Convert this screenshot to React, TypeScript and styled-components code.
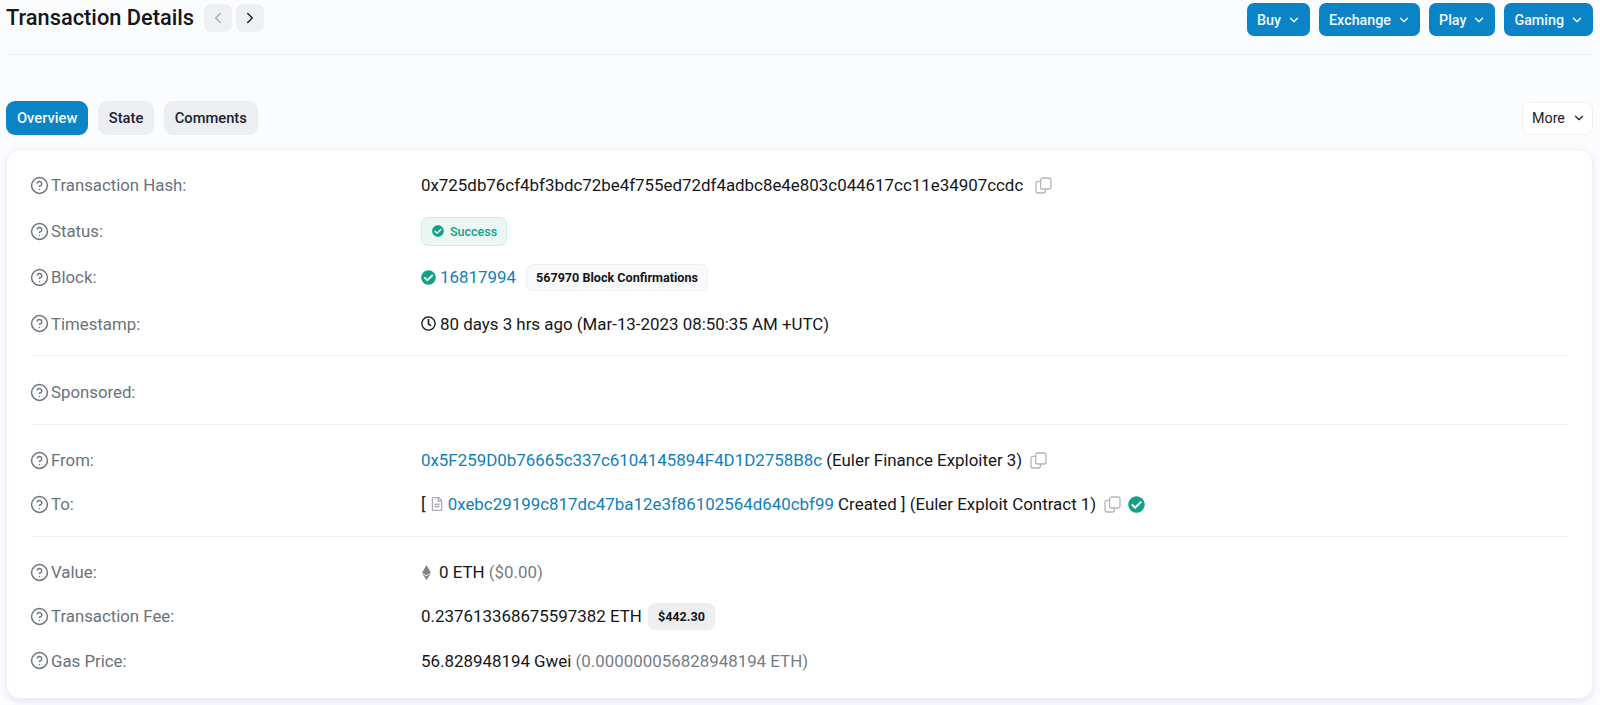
import React from 'react';
import styled, { createGlobalStyle } from 'styled-components';
import { ChevronDown, ChevronLeft, ChevronRight, CircleHelp } from 'lucide-react';
import { FaCheckCircle, FaEthereum, FaRegClock, FaRegFileAlt } from 'react-icons/fa';

const GlobalStyle = createGlobalStyle`
  html, body {
    margin: 0;
    padding: 0;
    height: 705px;
    overflow: hidden;
    background: #fbfcfe;
    font-family: Roboto, 'Liberation Sans', sans-serif;
    color: #14161a;
  }
  * { box-sizing: border-box; }
`;

const Page = styled.div`
  padding: 0 7px 0 6px;
`;

const Header = styled.header`
  display: flex;
  justify-content: space-between;
  align-items: flex-start;
  height: 55px;
  padding-top: 3px;
  border-bottom: 1px solid #edeff2;
`;

const TitleGroup = styled.div`
  display: flex;
  align-items: center;
  gap: 4px;
  height: 30px;
`;

const Title = styled.h1`
  margin: 0 6px 0 0;
  font-size: 21.8px;
  font-weight: 500;
  line-height: 30px;
  color: #14161a;
`;

const NavButton = styled.button<{ $off?: boolean }>`
  width: 28px;
  height: 28px;
  padding: 0;
  border: 0;
  border-radius: 7px;
  background: #eff0f3;
  display: flex;
  align-items: center;
  justify-content: center;
  color: ${(p) => (p.$off ? '#a9adb3' : '#1b2330')};
`;

const Menu = styled.div`
  display: flex;
  gap: 9px;
`;

const MenuButton = styled.button`
  height: 33px;
  padding: 0 9px 0 10px;
  border: 0;
  border-radius: 7px;
  background: #0a84c6;
  color: #f2f8fc;
  display: flex;
  align-items: center;
  gap: 6px;
  font: 500 14.3px Roboto, sans-serif;
`;

const TabBar = styled.div`
  display: flex;
  justify-content: space-between;
  align-items: center;
  margin-top: 46px;
  height: 34px;
`;

const Tabs = styled.div`
  display: flex;
  gap: 9.5px;
`;

const Tab = styled.button<{ $active?: boolean }>`
  height: 34px;
  padding: 0 11px;
  border: 0;
  border-radius: 9px;
  background: ${(p) => (p.$active ? '#0a84c6' : '#eceef1')};
  color: ${(p) => (p.$active ? '#f4f9fd' : '#1b2330')};
  font: 500 14.7px Roboto, sans-serif;
`;

const MoreButton = styled.button`
  height: 33px;
  width: 71px;
  padding: 0 0 0 9px;
  border: 1px solid #f0f1f4;
  border-radius: 7px;
  background: #fff;
  color: #1b2026;
  display: flex;
  align-items: center;
  gap: 7px;
  font: 400 14.3px Roboto, sans-serif;
`;

const Card = styled.section`
  margin-top: 14px;
  height: 550px;
  padding: 12px 24px 0;
  background: #fff;
  border: 1px solid #f1f2f6;
  border-radius: 14px;
  box-shadow: 0 3px 6px rgba(205, 205, 235, 0.4);
`;

const Row = styled.div<{ $h?: number }>`
  display: grid;
  grid-template-columns: 390px 1fr;
  align-items: center;
  height: ${(p) => p.$h ?? 46}px;
`;

const Label = styled.div`
  display: flex;
  align-items: center;
  gap: 2px;
  font-size: 16.8px;
  color: #69727c;
  svg {
    color: #6b7279;
    margin-left: -1px;
  }
`;

const Value = styled.div`
  display: flex;
  align-items: center;
  font-size: 16.9px;
  white-space: pre;
  color: #14161a;
`;

const Link = styled.a`
  color: #0f80ba;
  text-decoration: none;
`;

const Muted = styled.span`
  color: #757c85;
`;

const Divider = styled.hr<{ $before: number; $after: number }>`
  margin: ${(p) => p.$before}px 0 ${(p) => p.$after}px;
  border: 0;
  border-top: 1px solid #eff1f3;
`;

const StatusBadge = styled.span`
  display: inline-flex;
  align-items: center;
  gap: 6px;
  height: 29px;
  padding: 0 9px 0 10px;
  border: 1px solid #d3ebe5;
  border-radius: 7px;
  background: #ecf6f3;
  color: #14a184;
  font-size: 12.5px;
  font-weight: 500;
`;

const Chip = styled.span<{ $grey?: boolean }>`
  display: inline-flex;
  align-items: center;
  height: 27px;
  padding: 0 9px;
  margin-left: ${(p) => (p.$grey ? 6 : 10)}px;
  border-radius: 7px;
  border: 1px solid ${(p) => (p.$grey ? '#eceef0' : '#eff0f2')};
  background: ${(p) => (p.$grey ? '#eceef0' : '#f8f9fa')};
  color: #14161a;
  font-size: 12.6px;
  font-weight: 700;
`;

const LeadIcon = styled.span<{ $color?: string; $gap?: number; $pull?: number }>`
  display: inline-flex;
  margin-left: ${(p) => p.$pull ?? 0}px;
  margin-right: ${(p) => p.$gap ?? 4}px;
  color: ${(p) => p.$color ?? '#1d2126'};
`;

const CopyWrap = styled.span<{ $gap?: number }>`
  display: inline-flex;
  margin: 0 ${(p) => (p.$gap ? 7 : 0)}px 0 ${(p) => p.$gap ?? 12}px;
  color: #b3b6ba;
`;

const CopyIcon = ({ gap }: { gap?: number }) => (
  <CopyWrap $gap={gap}>
    <svg width="17" height="17" viewBox="0 0 17 17" fill="none" stroke="currentColor" strokeWidth="1.3">
      <rect x="5.6" y="1" width="10.4" height="11" rx="2" />
      <path d="M5.6 4.4H3A2 2 0 0 0 1 6.4V14a2 2 0 0 0 2 2h5.4a2 2 0 0 0 2-2v-2" />
    </svg>
  </CopyWrap>
);

const Field = ({ label, h, children }: { label: string; h?: number; children?: React.ReactNode }) => (
  <Row $h={h}>
    <Label>
      <CircleHelp size={19} strokeWidth={1.8} />
      {label}
    </Label>
    <Value>{children}</Value>
  </Row>
);

export default function App() {
  return (
    <Page>
      <GlobalStyle />
      <Header>
        <TitleGroup>
          <Title>Transaction Details</Title>
          <NavButton $off>
            <ChevronLeft size={18} />
          </NavButton>
          <NavButton>
            <ChevronRight size={18} />
          </NavButton>
        </TitleGroup>
        <Menu>
          {['Buy', 'Exchange', 'Play', 'Gaming'].map((m) => (
            <MenuButton key={m}>
              {m}
              <ChevronDown size={14} strokeWidth={2.5} />
            </MenuButton>
          ))}
        </Menu>
      </Header>

      <TabBar>
        <Tabs>
          <Tab $active>Overview</Tab>
          <Tab>State</Tab>
          <Tab>Comments</Tab>
        </Tabs>
        <MoreButton>
          More
          <ChevronDown size={14} strokeWidth={2} />
        </MoreButton>
      </TabBar>

      <Card>
        <Field label="Transaction Hash:">
          0x725db76cf4bf3bdc72be4f755ed72df4adbc8e4e803c044617cc11e34907ccdc
          <CopyIcon />
        </Field>
        <Field label="Status:">
          <StatusBadge>
            <FaCheckCircle size={12} />
            Success
          </StatusBadge>
        </Field>
        <Field label="Block:">
          <LeadIcon $color="#12a184">
            <FaCheckCircle size={15} />
          </LeadIcon>
          <Link>16817994</Link>
          <Chip>567970 Block Confirmations</Chip>
        </Field>
        <Field label="Timestamp:" h={47}>
          <LeadIcon>
            <FaRegClock size={15} />
          </LeadIcon>
          80 days 3 hrs ago (Mar-13-2023 08:50:35 AM +UTC)
        </Field>
        <Divider $before={8} $after={13} />
        <Field label="Sponsored:" />
        <Divider $before={9} $after={13} />
        <Field label="From:" h={44}>
          <Link>0x5F259D0b76665c337c6104145894F4D1D2758B8c</Link> (Euler Finance Exploiter 3)
          <CopyIcon gap={8} />
        </Field>
        <Field label="To:" h={44}>
          [{' '}
          <LeadIcon $color="#a9adb2">
            <FaRegFileAlt size={14} />
          </LeadIcon>
          <Link>0xebc29199c817dc47ba12e3f86102564d640cbf99</Link> Created ] (Euler Exploit Contract 1)
          <CopyIcon gap={8} />
          <LeadIcon $color="#12a184">
            <FaCheckCircle size={17} />
          </LeadIcon>
        </Field>
        <Divider $before={10} $after={13} />
        <Field label="Value:" h={44}>
          <LeadIcon $color="#7d848c" $gap={5} $pull={-2}>
            <FaEthereum size={15} />
          </LeadIcon>
          0 ETH <Muted>($0.00)</Muted>
        </Field>
        <Field label="Transaction Fee:" h={44}>
          0.237613368675597382 ETH
          <Chip $grey>$442.30</Chip>
        </Field>
        <Field label="Gas Price:" h={45}>
          56.828948194 Gwei <Muted>(0.000000056828948194 ETH)</Muted>
        </Field>
      </Card>
    </Page>
  );
}
